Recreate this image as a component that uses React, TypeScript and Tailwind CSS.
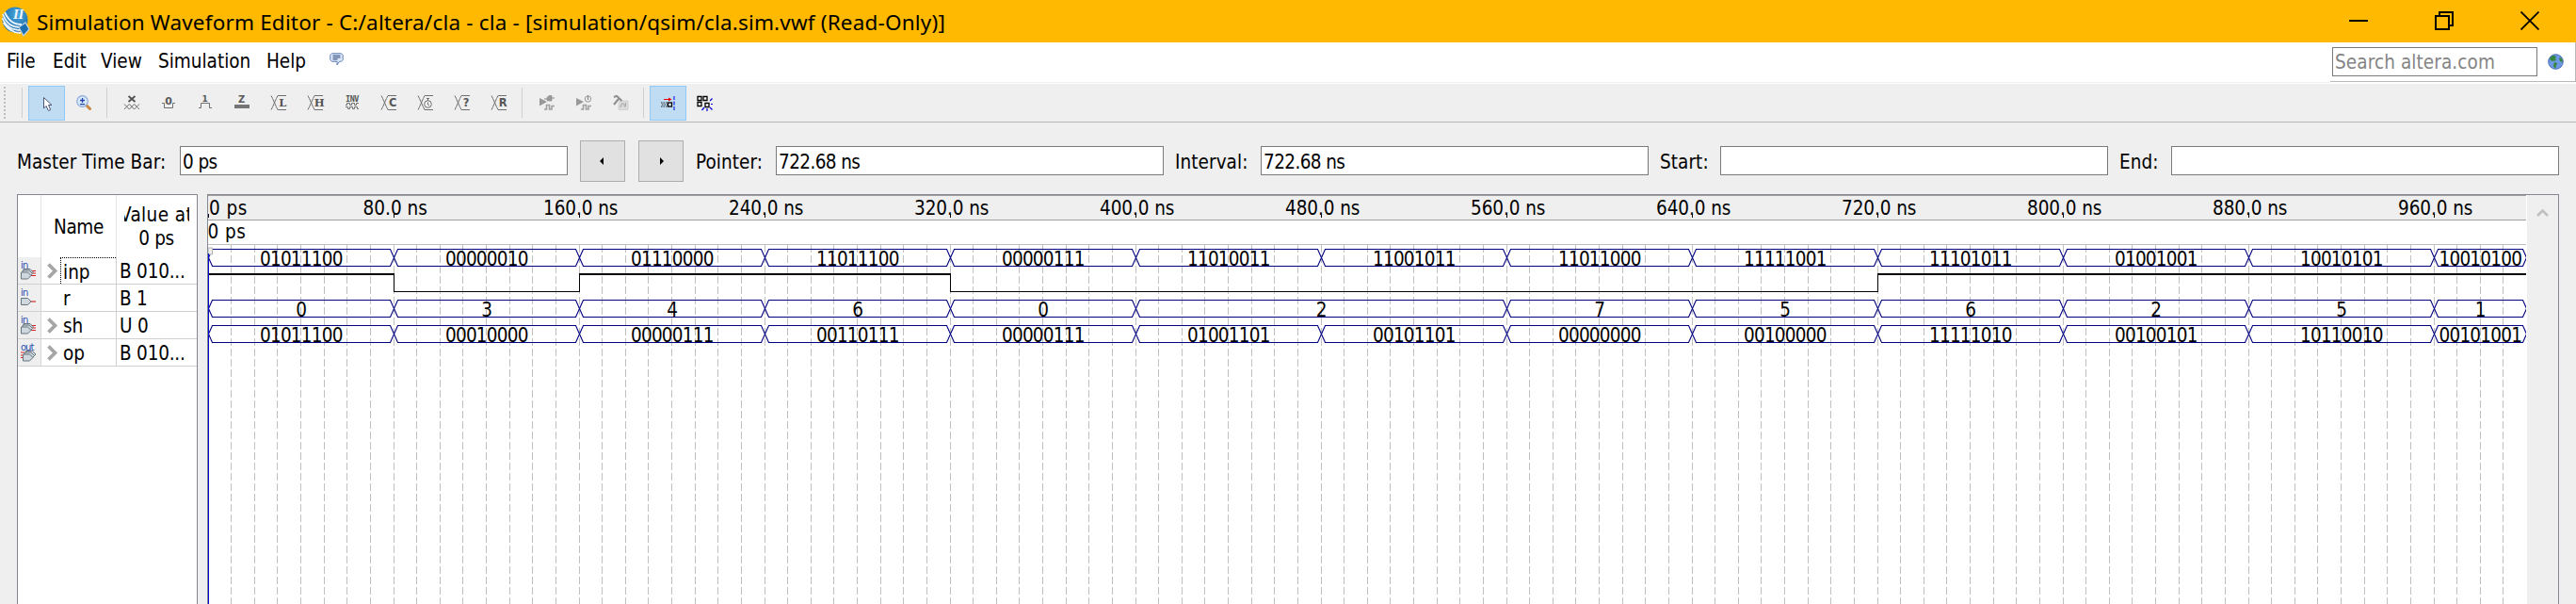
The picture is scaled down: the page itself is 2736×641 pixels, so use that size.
import React from "react";

type Segment = { from: number; to: number; label: string };

const INP = ["01011100", "00000010", "01110000", "11011100", "00000111", "11010011", "11001011", "11011000", "11111001", "11101011", "01001001", "10010101", "10010100"];
const OP = ["01011100", "00010000", "00000111", "00110111", "00000111", "01001101", "00101101", "00000000", "00100000", "11111010", "00100101", "10110010", "00101001"];
const SH = ["0", "3", "4", "6", "0", "2", "2", "7", "5", "6", "2", "5", "1"];
const R = [1, 0, 1, 1, 0, 0, 0, 0, 0, 1, 1, 1, 1];

const STEP = 197;
const WIDTH = 2462;

function toSegments(values: string[]): Segment[] {
  const out: Segment[] = [];
  values.forEach((label, i) => {
    const last = out[out.length - 1];
    const to = Math.min((i + 1) * STEP, WIDTH);
    if (last && last.label === label) last.to = to;
    else out.push({ from: i * STEP, to, label });
  });
  return out;
}

function Bus({ values, top }: { values: string[]; top: number }) {
  const mid = top + 9;
  const bottom = top + 18;
  return (
    <g>
      {toSegments(values).map((s) => {
        const a = s.from + 0.5;
        const b = s.to + 0.5;
        return (
          <g key={s.from}>
            <path
              d={`M${a} ${mid}L${a + 4} ${top}H${b - 4}L${b} ${mid}L${b - 4} ${bottom}H${a + 4}Z`}
              fill="none"
              stroke="#000080"
              strokeWidth="1.1"
            />
            <text x={(s.from + s.to) / 2 + 0.5} y={bottom - 0.5} textAnchor="middle" textLength={s.label.length * 11} fontSize="20.5">
              {s.label}
            </text>
          </g>
        );
      })}
    </g>
  );
}

function Level() {
  const high = 84;
  const low = 102.5;
  const parts: React.ReactNode[] = [];
  R.forEach((v, i) => {
    const x = i * STEP;
    const w = Math.min(STEP, WIDTH - x);
    parts.push(
      v ? <rect key={i} x={x} y={high - 1} width={w} height="2" /> : <rect key={i} x={x} y={low - 0.5} width={w + 1} height="1" />
    );
    if (i > 0 && R[i - 1] !== v) parts.push(<rect key={"e" + i} x={x} y={high - 1} width="1" height={low - high + 1.5} />);
  });
  return <g fill="#000">{parts}</g>;
}

function Waveform() {
  const grid = Array.from({ length: 99 }, (_, i) => Math.floor((i + 1) * 24.625));
  const ticks = Array.from({ length: 12 }, (_, i) => i + 1);
  return (
    <svg width="2462" height="434" viewBox="0 0 2462 434" className="block shrink-0 font-['DejaVu_Sans_Condensed','DejaVu_Sans',sans-serif]">
      <rect width="2462" height="434" fill="#fff" />
      <rect width="2462" height="26" fill="#efefef" />
      <rect width="2462" height="1" fill="#a0a0a0" />
      <rect y="26" width="2462" height="1" fill="#a0a0a0" />
      <rect y="52" width="2462" height="1" fill="#c0c0c0" />
      {grid.map((x) => (
        <path key={x} d={`M${x + 0.5} 53V434`} stroke="#c0c0c0" strokeDasharray="8 3" />
      ))}
      <text x="1" y="20.5" fontSize="20.5" textLength="40">0 ps</text>
      <text x="-0.5" y="45.7" fontSize="20.5" textLength="40">0 ps</text>
      <rect x="0" y="20" width="1" height="4" />
      {ticks.map((i) => (
        <g key={i}>
          <text x={i * STEP + 1.5} y="20.5" fontSize="20.5" textAnchor="middle" textLength={i === 1 ? 68 : 79}>
            {i * 80}.0 ns
          </text>
          <rect x={i * STEP} y="20" width="1" height="4" />
        </g>
      ))}
      <Bus values={INP} top={57.5} />
      <Level />
      <Bus values={SH} top={111.5} />
      <Bus values={OP} top={138.5} />
      <path d="M0 56H4.5V63H0Z" fill="#efefef" stroke="#b0b0b0" />
      <rect x="0" y="62" width="1" height="372" fill="#0000d0" />
    </svg>
  );
}

function ToolButton({ active, children }: { active?: boolean; children: React.ReactNode }) {
  return (
    <button
      className={
        active
          ? "flex h-[37px] w-[39px] items-center justify-center border border-[#90c8f6] bg-[#bfdcf3]"
          : "flex h-[37px] w-[39px] items-center justify-center"
      }
    >
      {children}
    </button>
  );
}

function Separator() {
  return (
    <div className="flex w-3 justify-center">
      <div className="mr-px h-8 w-px bg-[#cfcfcf]" />
    </div>
  );
}

function Icon({ children }: { children: React.ReactNode }) {
  return (
    <svg width="16" height="16" viewBox="0 0 16 16" fill="none" stroke="#6f6f6f" className="overflow-visible font-['DejaVu_Sans_Mono',monospace]">
      {children}
    </svg>
  );
}

function Glyph({ x, y, size = 11, children }: { x: number; y: number; size?: number; children: string }) {
  return (
    <text x={x} y={y} fontSize={size} fontWeight="bold" fill="#5c5c5c" stroke="none" textAnchor="middle" className="font-['DejaVu_Sans',sans-serif]">
      {children}
    </text>
  );
}

function BusIcon({ letter, serif }: { letter?: string; serif?: boolean }) {
  return (
    <Icon>
      <path d="M0 .5L1.500 3.500L5.500 12.500L7 15.500M0 15.500L1.500 12.500L5.500 3.500L7 .5H16M7 15.500H16" strokeWidth="1" />
      {letter && (
        <text
          x="12"
          y="12"
          fontSize="11.5"
          fontWeight="bold"
          fill="#565656"
          stroke="none"
          textAnchor="middle"
          className={serif ? "font-['DejaVu_Serif',serif]" : "font-['DejaVu_Sans',sans-serif]"}
        >
          {letter}
        </text>
      )}
      {!letter && (
        <g>
          <circle cx="10.500" cy="9.500" r="3.800" />
          <path d="M10.500 3V6M9 3.500H12M10.500 7.500V10L12 11" />
        </g>
      )}
    </Icon>
  );
}

function PlayWave({ children }: { children: React.ReactNode }) {
  return (
    <Icon>
      <path d="M0 3L8 7L0 11.500Z" fill="#999" stroke="none" />
      <path d="M5 15H7.500V10.500H10.500V15H13V11.500H16" stroke="#a0a0a0" strokeWidth="1.600" />
      {children}
    </Icon>
  );
}

function Toolbar() {
  return (
    <div className="flex h-[41px] items-center border-b border-[#b5b5b5] bg-[#efefef]">
      <div className="flex w-[30px] items-center">
        <svg width="18" height="36" className="block" shapeRendering="crispEdges">
          {Array.from({ length: 9 }, (_, i) => (
            <rect key={i} x="4" y={1 + i * 4} width="2" height="2" fill="#bdbdbd" />
          ))}
        </svg>
        <div className="ml-[5px] h-8 w-px bg-[#cfcfcf]" />
      </div>
      <ToolButton active>
        <svg width="16" height="16" viewBox="0 0 16 16" className="relative top-px">
          <path d="M4.500 1.500V13L7 10.500L9.500 15.500L11.700 14.500L9.500 9.500H13Z" fill="#fff" stroke="#4d5878" strokeLinejoin="round" />
        </svg>
      </ToolButton>
      <ToolButton>
        <svg width="16" height="16" viewBox="0 0 16 16">
          <path d="M11 11L14.500 14.500" stroke="#c98742" strokeWidth="3" strokeLinecap="round" />
          <circle cx="6.500" cy="6.500" r="5.800" fill="#d6e8fb" stroke="#8cabd9" strokeWidth="1.200" />
          <path d="M6.500 3V8M4 5.500H9M4 9.700H9" stroke="#2744a8" strokeWidth="1.300" />
        </svg>
      </ToolButton>
      <Separator />
      <ToolButton>
        <Icon>
          <path d="M4.500 1L11.500 7M11.500 1L4.500 7" stroke="#505050" strokeWidth="1.800" />
          <path d="M0 9.500L5.300 15L10.600 9.500L16 15M0 15L5.300 9.500L10.600 15L16 9.500" strokeWidth="1" />
        </Icon>
      </ToolButton>
      <ToolButton>
        <Icon>
          <path d="M1 8.500H3.500V13.500H12.500V8.500H15" />
          <Glyph x={8} y={9.5}>0</Glyph>
        </Icon>
      </ToolButton>
      <ToolButton>
        <Icon>
          <path d="M1 13.500H3.500V8.500H12.500V13.500H15" />
          <Glyph x={7.500} y={7} size={9}>1</Glyph>
        </Icon>
      </ToolButton>
      <ToolButton>
        <Icon>
          <rect x="0" y="10" width="16" height="4" fill="#757575" stroke="none" />
          <Glyph x={7.500} y={8} size={10}>Z</Glyph>
        </Icon>
      </ToolButton>
      <ToolButton><BusIcon letter="L" serif /></ToolButton>
      <ToolButton><BusIcon letter="H" serif /></ToolButton>
      <ToolButton>
        <Icon>
          <text x="8" y="7" fontSize="8" fontWeight="bold" fill="#565656" stroke="none" textAnchor="middle" textLength="14" lengthAdjust="spacingAndGlyphs">INV</text>
          <path d="M1 10.500H2.500V8.500H5.500V10.500H7.500V8.500H10.500V10.500H12.500V8.500H15M1 12.500H3.500V14.500H5.500V12.500H8.500V14.500H10.500V12.500H13.500V14.500H15" />
        </Icon>
      </ToolButton>
      <ToolButton><BusIcon letter="C" /></ToolButton>
      <ToolButton><BusIcon /></ToolButton>
      <ToolButton><BusIcon letter="?" /></ToolButton>
      <ToolButton><BusIcon letter="R" /></ToolButton>
      <Separator />
      <ToolButton>
        <PlayWave>
          <path d="M5 4H8M13 3H16" stroke="#888" />
          <path d="M8 5.500V2.500L10 .5H13V6H9Z" fill="#9a9a9a" stroke="#888" strokeWidth=".6" />
        </PlayWave>
      </ToolButton>
      <ToolButton>
        <PlayWave>
          <circle cx="12.500" cy="4" r="3.200" fill="#e8e8e8" stroke="#999" />
          <path d="M12.500 0V5" stroke="#888" />
        </PlayWave>
      </ToolButton>
      <ToolButton>
        <Icon>
          <path d="M7 6H16V15.500H6V10Z" fill="#dcdcdc" stroke="#c4c4c4" strokeWidth=".6" />
          <path d="M7 12H9V9H12V12H13.500V8" stroke="#aaa" />
          <path d="M1 10L6 4M1 2L4 .8L9.500 6" stroke="#8d8d8d" strokeWidth="2" />
        </Icon>
      </ToolButton>
      <Separator />
      <ToolButton active>
        <svg width="16" height="16" viewBox="0 0 16 16" fill="none">
          <path d="M3 4.500H10" stroke="#e00" strokeWidth="1" />
          <path d="M8 2.500L11.500 4.500L8 6.500Z" fill="#e00" />
          <path d="M0 8H7.500M0 12H7.500M1 10H7.500" stroke="#222" strokeDasharray="1.500 1" />
          <rect x="7.500" y="8" width="4" height="4" fill="#dfe9f2" stroke="#000" strokeWidth="1.300" />
          <path d="M14 1V16" stroke="#0000e0" strokeDasharray="4 1.500" />
        </svg>
      </ToolButton>
      <ToolButton>
        <svg width="17" height="17" viewBox="0 0 17 17" fill="none">
          <path d="M1 1.500H5V5.500H1ZM7 1.500H11V5.500H7ZM1 7.500H5V11.500H1ZM9 8.500H13V12.500H9Z" fill="#fff" stroke="#000" strokeWidth="1.300" />
          <path d="M14 6L16.500 3.500M15 9.500H17M14 13L16.500 15.500M11 14V17M8 13L5.500 16" stroke="#00d" strokeWidth="1.200" />
        </svg>
      </ToolButton>
    </div>
  );
}

function Field({ label, value, labelClass }: { label: string; value: string; labelClass: string }) {
  return (
    <>
      <span className={labelClass}>{label}</span>
      <div className="h-[31px] w-[412px] shrink-0 border border-[#7a7a7a] bg-white pl-[2px] leading-[32px] tracking-[-0.6px]">{value}</div>
    </>
  );
}

function StepButton({ dir }: { dir: "left" | "right" }) {
  return (
    <button className="flex h-11 w-12 shrink-0 items-center justify-center border border-[#adadad] bg-[#e1e1e1]">
      <svg width="8" height="8" viewBox="0 0 8 8">
        <path d={dir === "left" ? "M5 0V8L1 4Z" : "M3 0V8L7 4Z"} />
      </svg>
    </button>
  );
}

function PortIcon({ kind, bus }: { kind: "in" | "out"; bus: boolean }) {
  const body = (dx: number, dy: number) => (
    <path d={`M${0.5 + dx} ${11 + dy}H${7.5 + dx}L${11 + dx} ${14.5 + dy}L${7.5 + dx} ${18 + dy}H${0.5 + dx}Z`} fill="#cfd8df" stroke="#67757f" strokeWidth="1" />
  );
  return (
    <svg width="24" height="28" viewBox="0 0 24 28" className="block">
      <g transform="translate(3 3.5)">
        {kind === "in" && (
          <>
            {bus ? <path d="M11 13.500H16M11 16H16M11 11H16" stroke="#e02020" /> : <path d="M11 14.500H16" stroke="#d04040" strokeWidth="1.300" />}
            {bus && body(2.500, -2)}
            {bus && body(1.500, -0.500)}
            {body(0, bus ? 1.500 : 0)}
          </>
        )}
        {kind === "out" && (
          <>
            <path d="M0 10.500H4M0 13.500H4M0 16H4" stroke="#e02020" />
            {body(5, -2)}
            {body(3.500, -0.500)}
            {body(2, 1.500)}
          </>
        )}
        <text x="0" y="8.300" fontSize="10" fill="#2b4fb0" className="font-['DejaVu_Sans',sans-serif]" textLength={kind === "in" ? 8 : 14}>
          {kind}
        </text>
      </g>
    </svg>
  );
}

const SIGNALS: { name: string; value: string; kind: "in" | "out"; bus: boolean }[] = [
  { name: "inp", value: "B 010...", kind: "in", bus: true },
  { name: "r", value: "B 1", kind: "in", bus: false },
  { name: "sh", value: "U 0", kind: "in", bus: true },
  { name: "op", value: "B 010...", kind: "out", bus: true },
];

function SignalTable() {
  return (
    <div className="flex w-48 shrink-0 flex-col border border-b-0 border-[#828790] bg-white">
      <div className="flex h-[66px] shrink-0">
        <div className="w-[25px] border-r border-[#e5e5e5]" />
        <div className="flex w-20 items-center justify-center border-r border-[#e5e5e5] pt-[3px]">Name</div>
        <div className="flex w-[84px] flex-col items-center px-[7px] pt-[9px] leading-[25px]">
          <div className="flex w-[69px] justify-center overflow-hidden whitespace-nowrap tracking-[0.4px]">
            <span className="shrink-0">Value at</span>
          </div>
          <div>0 ps</div>
        </div>
      </div>
      {SIGNALS.map((s, i) => (
        <div key={s.name} className="flex h-[29px] shrink-0 border-b border-[#d0d0d0]">
          <div className="w-[25px] border-r border-[#d8d8d8] bg-[#efefef]">
            <PortIcon kind={s.kind} bus={s.bus} />
          </div>
          <div className="flex w-20 border-r border-[#d0d0d0] tracking-[0px]">
            <div className="flex w-[20px] shrink-0 items-center pl-[6px]">
              {s.bus && (
                <svg width="12" height="17" viewBox="0 0 12 17">
                  <path d="M1.500 1.500L8.500 8.500L1.500 15.500" fill="none" stroke="#a6a6a6" strokeWidth="3.800" />
                </svg>
              )}
            </div>
            <div className={i === 0 ? "grow border-l border-t border-dotted border-black pl-[2px] leading-[30px]" : "grow pl-[3px] leading-[31px]"}>{s.name}</div>
          </div>
          <div className="pl-[3px] leading-[31px] tracking-[-0.2px]">{s.value}</div>
        </div>
      ))}
    </div>
  );
}

function AppLogo() {
  return (
    <svg width="30" height="32" viewBox="0 0 30 32">
      <defs>
        <radialGradient id="ball" cx=".6" cy=".3" r=".8">
          <stop offset="0" stopColor="#4aa8dc" />
          <stop offset="1" stopColor="#0e5c9c" />
        </radialGradient>
      </defs>
      <circle cx="14" cy="14" r="13.500" fill="url(#ball)" />
      <path d="M1 8C5 18 10 22 20 22M.5 12C4 21 10 25 20 25M1.500 17C6 24 11 28 20 28M3 6C7 15 12 19 21 19" fill="none" stroke="#e8f2fa" strokeWidth="1.900" />
      <text x="12" y="13" fontSize="15" fontWeight="bold" fontStyle="italic" fill="#eef6fc" className="font-['Liberation_Serif',serif]">II</text>
      <path d="M18 22L25 17L29 24L23 31Z" fill="#1b6fb0" stroke="#b9cfe0" strokeWidth="1.300" />
    </svg>
  );
}

export default function App() {
  return (
    <div className="flex h-[641px] w-[2736px] flex-col overflow-hidden bg-[#efefef] font-['DejaVu_Sans_Condensed','DejaVu_Sans',sans-serif] text-[20.5px] tracking-[-0.4px] text-black">
      <header className="flex h-[45px] shrink-0 items-center justify-between bg-[#ffb900]">
        <div className="flex items-center pl-[2px]">
          <AppLogo />
          <h1 className="ml-[7px] whitespace-nowrap pt-[2px] font-['Noto_Sans',sans-serif] text-[22.5px] tracking-[0.18px]">
            Simulation Waveform Editor - C:/altera/cla - cla - [simulation/qsim/cla.sim.vwf (Read-Only)]
          </h1>
        </div>
        <div className="flex gap-[71px] pr-[39px]">
          <svg width="20" height="20" viewBox="0 0 20 20" className="relative -top-px"><path d="M0 10H20" stroke="#000" strokeWidth="2" /></svg>
          <svg width="20" height="20" viewBox="0 0 20 20" fill="none" stroke="#000" strokeWidth="2" className="relative -top-px"><path d="M1 5H15V19H1ZM5 5V1H19V15H15" /></svg>
          <svg width="20" height="20" viewBox="0 0 20 20" className="relative -top-px"><path d="M.5 .5L19.500 19.500M19.500 .5L.5 19.500" stroke="#000" strokeWidth="1.800" /></svg>
        </div>
      </header>

      <nav className="flex h-11 shrink-0 bg-white">
        <div className="flex h-[43px] grow items-start border-b border-[#f0f0f0] pl-[7px] leading-[40px] tracking-[0px]">
          <span className="w-[49px]">File</span>
          <span className="w-[51px]">Edit</span>
          <span className="w-[61px]">View</span>
          <span className="w-[115px]">Simulation</span>
          <span className="w-[67px]">Help</span>
          <svg width="15" height="14" viewBox="0 0 15 14" className="mt-[11px]">
            <path d="M2.500 .7H12.500L14.200 2.500V7.500L12.500 9.300H10.500L8 13V9.300H2.500L.8 7.500V2.500Z" fill="#dce8fb" stroke="#6480b4" />
            <path d="M3.500 3H11.500M3.500 5H11.500M3.500 7H8.500" stroke="#2d4474" />
          </svg>
        </div>
        <div className="flex h-[42px] w-[261px] items-start border-b border-r border-[#b8b8b8] pl-[2px] pt-[5px]">
          <div className="h-[31px] w-[218px] border border-[#7a7a7a] pl-[2px] leading-[31px] tracking-[0.1px] text-[#858585]">Search altera.com</div>
          <svg width="17" height="17" viewBox="0 0 17 17" className="ml-[11px] mt-[7px]">
            <circle cx="8.500" cy="8.500" r="7.800" fill="#6c98e4" stroke="#476bb8" />
            <path d="M2 5L5 2L9 2.500L8 5L9 7L5 8L3 7ZM7 9L10 10L9 13L8 16L6 13ZM12 4L15 5L16 9L13 8Z" fill="#35853b" />
          </svg>
        </div>
      </nav>

      <Toolbar />

      <div className="flex h-[76px] shrink-0 items-center whitespace-nowrap pl-[18px] pt-[5px]">
        <Field label="Master Time Bar:" value="0 ps" labelClass="w-[173px] shrink-0 pt-[3px] tracking-[0.07px]" />
        <div className="ml-[13px] flex gap-[14px]">
          <StepButton dir="left" />
          <StepButton dir="right" />
        </div>
        <Field label="Pointer:" value="722.68 ns" labelClass="ml-[13px] w-[85px] shrink-0 pt-[3px] tracking-[0.07px]" />
        <Field label="Interval:" value="722.68 ns" labelClass="ml-3 w-[91px] shrink-0 pt-[3px] tracking-[0.07px]" />
        <Field label="Start:" value="" labelClass="ml-3 w-16 shrink-0 pt-[3px] tracking-[0.07px]" />
        <Field label="End:" value="" labelClass="ml-3 w-[55px] shrink-0 pt-[3px] tracking-[0.07px]" />
      </div>

      <main className="flex grow gap-[10px] pl-[18px]">
        <SignalTable />
        <div className="flex h-[435px] w-[2498px] shrink-0 overflow-hidden border border-b-0 border-[#828790] bg-white">
          <Waveform />
          <div className="ml-px flex w-[33px] justify-center bg-[#efefef] pt-[14px]">
            <svg width="13" height="10" viewBox="0 0 13 10">
              <path d="M1 8L6.500 2.500L12 8" fill="none" stroke="#c0c0c0" strokeWidth="2.600" />
            </svg>
          </div>
        </div>
      </main>
    </div>
  );
}
